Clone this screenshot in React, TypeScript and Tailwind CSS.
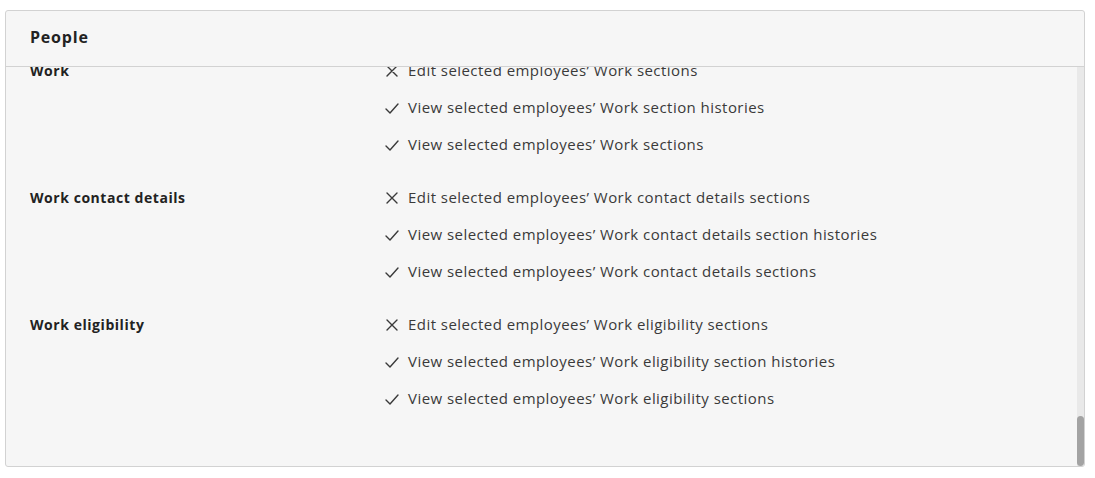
import React from 'react';

type Permission = { allowed: boolean; text: string };
type Group = { label: string; items: Permission[] };

const groups: Group[] = [
  {
    label: 'Work',
    items: [
      { allowed: false, text: "Edit selected employees\u2019 Work sections" },
      { allowed: true, text: "View selected employees\u2019 Work section histories" },
      { allowed: true, text: "View selected employees\u2019 Work sections" },
    ],
  },
  {
    label: 'Work contact details',
    items: [
      { allowed: false, text: "Edit selected employees\u2019 Work contact details sections" },
      { allowed: true, text: "View selected employees\u2019 Work contact details section histories" },
      { allowed: true, text: "View selected employees\u2019 Work contact details sections" },
    ],
  },
  {
    label: 'Work eligibility',
    items: [
      { allowed: false, text: "Edit selected employees\u2019 Work eligibility sections" },
      { allowed: true, text: "View selected employees\u2019 Work eligibility section histories" },
      { allowed: true, text: "View selected employees\u2019 Work eligibility sections" },
    ],
  },
];

const CrossIcon = () => (
  <svg width="14" height="14" viewBox="0 0 14 14" className="shrink-0">
    <path d="M2 2 L12 12 M12 2 L2 12" stroke="#3a3a3a" strokeWidth="1.4" strokeLinecap="round" fill="none" />
  </svg>
);

const CheckIcon = () => (
  <svg width="14" height="14" viewBox="0 0 14 14" className="shrink-0">
    <path d="M1 8 L5 12 L13 3" stroke="#3a3a3a" strokeWidth="1.4" strokeLinecap="round" strokeLinejoin="round" fill="none" />
  </svg>
);

const App: React.FC = () => {
  return (
    <div className="w-[1095px] h-[478px] bg-white pt-[10px] pl-[5px] font-['Open_Sans',sans-serif]">
      <div className="w-[1080px] h-[457px] border border-[#d2d2d2] rounded-[3px] bg-[#f6f6f6] flex flex-col overflow-hidden">
        <div className="h-[56px] shrink-0 border-b border-[#d2d2d2] flex items-center pl-[24px] pb-[3px]">
          <span className="text-[16px] font-bold text-[#222] tracking-[0.8px]">People</span>
        </div>
        <div className="relative flex-1 overflow-hidden">
          {/* list is scrolled to the bottom, so the first row is clipped */}
          <div className="-mt-[15px] pl-[24px]">
            {groups.map(group => (
              <div key={group.label} className="flex mb-[16px]">
                <div className="w-[355px] shrink-0 text-[14px] font-bold text-[#222] tracking-[0.55px] leading-[37px] h-[37px]">
                  {group.label}
                </div>
                <div className="flex flex-col">
                  {group.items.map(item => (
                    <div key={item.text} className="flex items-center gap-[9px] h-[37px] text-[15px] tracking-[0.45px] text-[#3a3a3a]">
                      {item.allowed ? <CheckIcon /> : <CrossIcon />}
                      <span>{item.text}</span>
                    </div>
                  ))}
                </div>
              </div>
            ))}
          </div>
          <div className="absolute right-0 top-0 bottom-0 w-[7px] bg-[#e9e9e9]">
            <div className="absolute bottom-0 left-0 right-0 h-[50px] rounded-full bg-[#a3a3a3]" />
          </div>
        </div>
      </div>
    </div>
  );
};

export default App;
